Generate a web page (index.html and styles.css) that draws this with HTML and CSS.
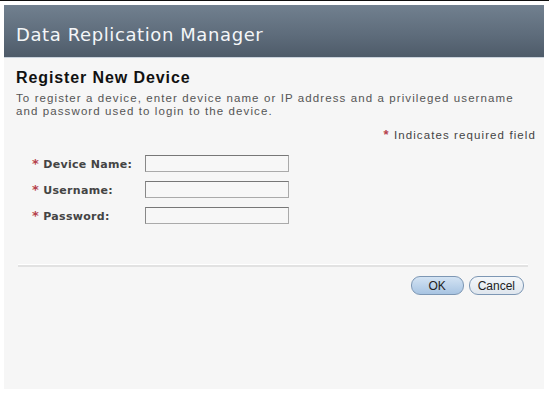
FILE: index.html
```html
<!DOCTYPE html>
<html lang="en">
<head>
  <meta charset="UTF-8" />
  <title>Data Replication Manager</title>
  <link rel="stylesheet" href="styles.css">
</head>
<body>
  <div class="window">
    <div class="masthead">Data Replication Manager</div>

    <div class="content">
      <h1 class="page-title">Register New Device</h1>
      <p class="help">To register a device, enter device name or IP address and a privileged username and password used to login to the device.</p>
      <div class="required-note"><span class="req">*</span> Indicates required field</div>

      <div class="form">
        <div class="row">
          <label><span class="req">*</span> Device Name:</label>
          <input type="text" />
        </div>
        <div class="row">
          <label><span class="req">*</span> Username:</label>
          <input type="text" />
        </div>
        <div class="row">
          <label><span class="req">*</span> Password:</label>
          <input type="password" />
        </div>
      </div>

      <div class="separator"></div>

      <div class="buttons">
        <button class="btn primary">OK</button>
        <button class="btn">Cancel</button>
      </div>
    </div>
  </div>
</body>
</html>
```

FILE: styles.css
```css
html, body {
  margin: 0;
  padding: 0;
}

body {
  background: #fff;
  border-top: 1px solid #111;
  font-family: 'DejaVu Sans', sans-serif;
  width: 549px;
  height: 393px;
  overflow: hidden;
}

.window {
  margin: 4px 4px 0 4px;
  width: 540px;
  height: 384px;
  background: #f6f6f6;
}

.masthead {
  height: 53px;
  box-sizing: border-box;
  padding: 19px 0 0 12px;
  background: linear-gradient(#71808f, #5d6b7a 60%, #4e5b69);
  border-bottom: 1px solid #c9d2dc;
  color: #f4f6f8;
  font-size: 18px;
  letter-spacing: 0.6px;
}

.content {
  padding: 11px 8px 0 12px;
}

.page-title {
  margin: 0;
  font-family: 'Liberation Sans', sans-serif;
  font-size: 16px;
  font-weight: bold;
  color: #111;
  letter-spacing: 0.9px;
}

.help {
  margin: 5px 0 0;
  font-family: 'Liberation Sans', sans-serif;
  font-size: 11.5px;
  line-height: 13px;
  color: #555;
  letter-spacing: 1.1px;
  width: 512px;
}

.required-note {
  margin-top: 9px;
  text-align: right;
  font-family: 'Liberation Sans', sans-serif;
  font-size: 11.5px;
  color: #444;
  letter-spacing: 1.1px;
}

.req {
  color: #b5414b;
  font-size: 13px;
  font-weight: bold;
}

.form {
  margin-top: 13px;
  padding-left: 16px;
  display: flex;
  flex-direction: column;
  gap: 9px;
}

.row {
  display: flex;
  align-items: center;
}

.row label {
  width: 113px;
  font-family: 'DejaVu Sans', sans-serif;
  font-size: 11px;
  font-weight: bold;
  color: #444;
  letter-spacing: 0.3px;
}

.row input {
  width: 144px;
  height: 17px;
  box-sizing: border-box;
  margin: 0;
  border: 1px solid #aaa;
  border-top-color: #777;
  border-left-color: #888;
  background: #f7f7f7;
}

.separator {
  margin: 40px 8px 0 2px;
  height: 2px;
  background: #e2e2e2;
  border-top: 1px solid #fff;
}

.buttons {
  margin-top: 9px;
  display: flex;
  justify-content: flex-end;
  gap: 5px;
  padding-right: 12px;
}

.btn {
  height: 19px;
  padding: 0 8px;
  border: 1px solid #7d97b4;
  border-radius: 9px;
  background: linear-gradient(#f4f7fa, #dfe6ee);
  font-family: 'Liberation Sans', sans-serif;
  font-size: 12px;
  color: #222;
}

.btn.primary {
  width: 53px;
  background: linear-gradient(#d3e3f3, #a8c4e2);
}
```
